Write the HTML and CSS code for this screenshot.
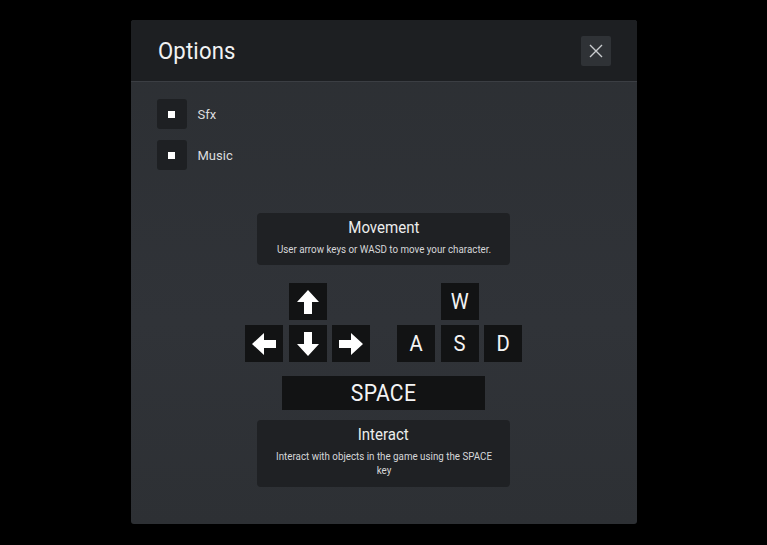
FILE: index.html
```html
<!DOCTYPE html>
<html lang="en">
<head>
  <meta charset="UTF-8" />
  <meta name="viewport" content="width=device-width, initial-scale=1" />
  <title>Options</title>
  <link rel="stylesheet" href="styles.css">
</head>
<body>
  <div class="modal">
    <div class="modal-header">
      <h1>Options</h1>
      <button class="close" aria-label="Close">
        <svg width="14" height="14" viewBox="0 0 14 14"><path d="M1 1L13 13M13 1L1 13" stroke="#c9cbce" stroke-width="1.4" fill="none"/></svg>
      </button>
    </div>
    <div class="modal-body">
      <label class="check"><span class="box"><span class="dot"></span></span>Sfx</label>
      <label class="check"><span class="box"><span class="dot"></span></span>Music</label>

      <div class="controls">
        <div class="card">
          <h2>Movement</h2>
          <p>User arrow keys or WASD to move your character.</p>
        </div>

        <div class="keysets">
          <div class="keyset">
            <span class="key spacer"></span>
            <span class="key">
              <svg width="24" height="26" viewBox="0 0 24 26"><path d="M12 1L23 13H16V25H8V13H1Z" fill="#fff"/></svg>
            </span>
            <span class="key spacer"></span>
            <span class="key">
              <svg width="26" height="24" viewBox="0 0 26 24"><path d="M1 12L13 1V8H25V16H13V23Z" fill="#fff"/></svg>
            </span>
            <span class="key">
              <svg width="24" height="26" viewBox="0 0 24 26"><path d="M12 25L23 13H16V1H8V13H1Z" fill="#fff"/></svg>
            </span>
            <span class="key">
              <svg width="26" height="24" viewBox="0 0 26 24"><path d="M25 12L13 1V8H1V16H13V23Z" fill="#fff"/></svg>
            </span>
          </div>
          <div class="keyset">
            <span class="key spacer"></span>
            <span class="key"><span class="cap">W</span></span>
            <span class="key spacer"></span>
            <span class="key"><span class="cap">A</span></span>
            <span class="key"><span class="cap">S</span></span>
            <span class="key"><span class="cap">D</span></span>
          </div>
        </div>

        <div class="space"><span class="cap">SPACE</span></div>

        <div class="card">
          <h2>Interact</h2>
          <p>Interact with objects in the game using the SPACE key</p>
        </div>
      </div>
    </div>
  </div>
</body>
</html>
```

FILE: styles.css
```css
body {
  margin: 0;
  background-color: #000;
  font-family: Roboto, "Liberation Sans", sans-serif;
  color: #e6e7e8;
}

.modal {
  width: 506px;
  height: 504px;
  margin: 20px auto 0;
  display: flex;
  flex-direction: column;
  border-radius: 3px;
  overflow: hidden;
  background: linear-gradient(180deg, #2c2f33 0%, #303338 60%, #2d3034 100%);
}

.modal-header {
  height: 61px;
  flex-shrink: 0;
  display: flex;
  align-items: center;
  justify-content: space-between;
  padding: 0 26px 0 27px;
  background-color: #1d1f22;
  border-bottom: 1px solid #3b3e43;
}

h1 {
  margin: 0;
  font-size: 24px;
  font-weight: 400;
  letter-spacing: 0.2px;
  transform: scaleX(0.92);
  transform-origin: left center;
  color: #f1f2f3;
}

.close {
  width: 30px;
  height: 30px;
  padding: 0;
  border: none;
  border-radius: 2px;
  background-color: #2f3236;
  display: flex;
  align-items: center;
  justify-content: center;
  cursor: pointer;
}

.modal-body {
  flex: 1;
  padding: 17px 26px 0;
}

.check {
  display: flex;
  align-items: center;
  gap: 11px;
  font-size: 13px;
  color: #dcdddf;
  height: 30px;
  margin-bottom: 11px;
}

.box {
  width: 30px;
  height: 30px;
  border-radius: 3px;
  background-color: #1e2023;
  display: flex;
  align-items: center;
  justify-content: center;
}

.dot {
  width: 7px;
  height: 7px;
  background-color: #fff;
}

.controls {
  display: flex;
  flex-direction: column;
  align-items: center;
  margin-top: 43px;
}

.card {
  width: 253px;
  box-sizing: border-box;
  padding: 5px 0 9px;
  border-radius: 4px;
  background-color: #1f2124;
  text-align: center;
  display: flex;
  flex-direction: column;
  align-items: center;
}

.card h2 {
  margin: 0;
  font-size: 16px;
  line-height: 20px;
  font-weight: 400;
  color: #eceded;
  transform: scaleX(0.94);
}

/* condensed look: squeeze the line a bit */
.card p {
  width: 266px;
  flex-shrink: 0;
  margin: 4px 0 0;
  font-size: 11.5px;
  line-height: 14px;
  color: #d6d7d9;
  transform: scaleX(0.85);
}

.keysets {
  display: flex;
  gap: 27px;
  margin-top: 18px;
}

.keyset {
  display: grid;
  grid-template-columns: repeat(3, 38px);
  grid-auto-rows: 37px;
  gap: 5px 5.5px;
}

.key {
  background-color: #121314;
  display: flex;
  align-items: center;
  justify-content: center;
  font-size: 22px;
  color: #f4f4f4;
}

.key.spacer {
  background: none;
}

.cap {
  display: inline-block;
  transform: scaleX(0.92);
}

.space {
  width: 203px;
  height: 34px;
  margin-top: 14px;
  background-color: #121314;
  display: flex;
  align-items: center;
  justify-content: center;
  font-size: 23px;
  letter-spacing: 0.3px;
  color: #f4f4f4;
}

.space + .card {
  margin-top: 10px;
  padding-bottom: 10px;
}
```
